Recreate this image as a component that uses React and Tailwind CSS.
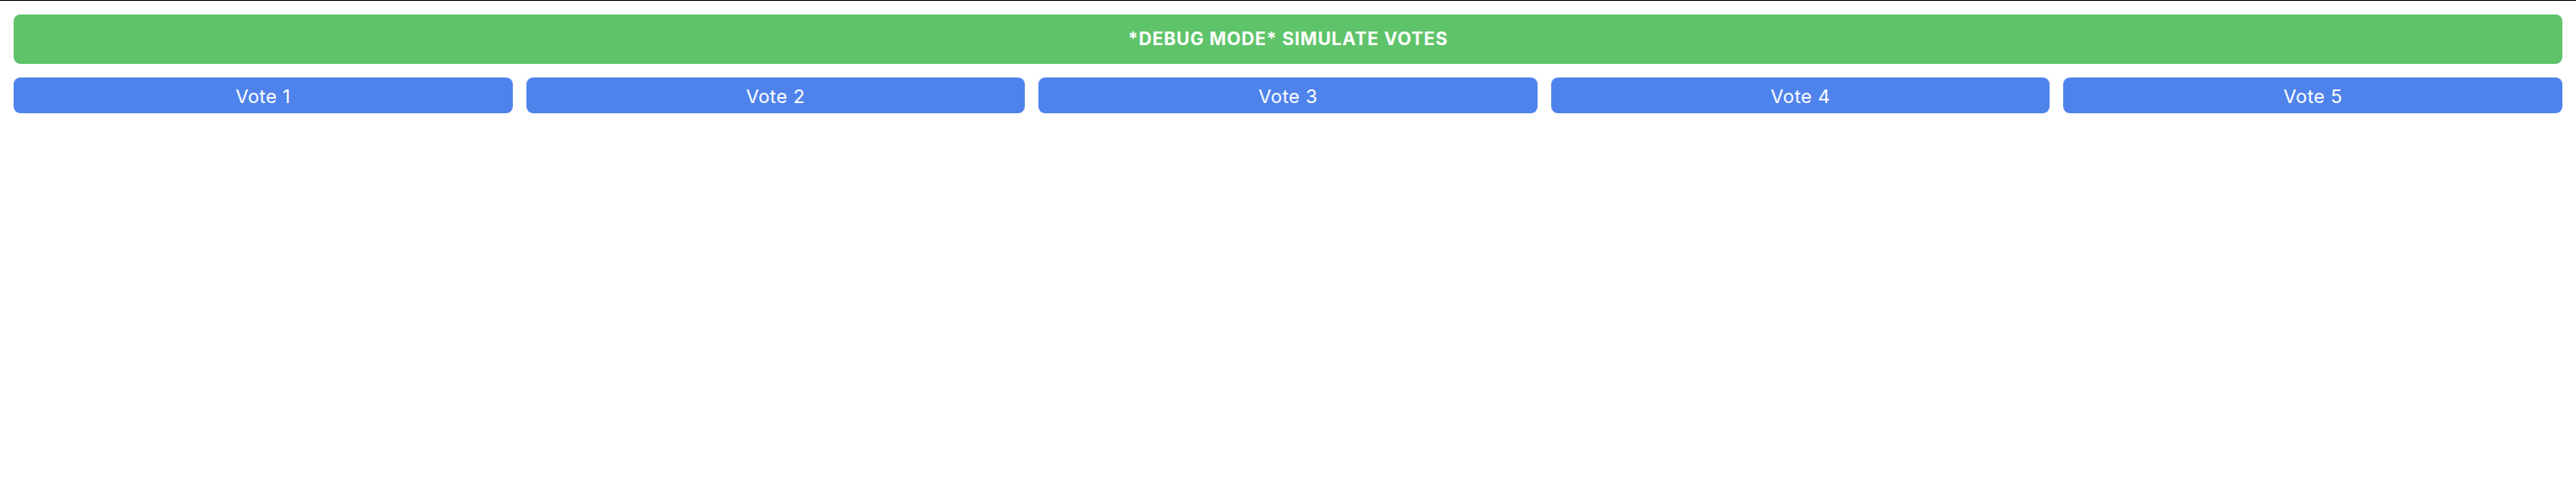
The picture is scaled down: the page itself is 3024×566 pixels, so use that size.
export default function App() {
  const votes = [1, 2, 3, 4, 5];
  return (
    <div className="min-h-[566px] w-full bg-white border-t border-black" style={{ fontFamily: "Inter, 'Noto Sans', sans-serif" }}>
      <div className="px-4 pt-4">
        <button className="w-full h-[58px] rounded-lg bg-[#5fc36a] text-white text-[21px] font-bold uppercase tracking-[0.04em]">
          *Debug Mode* Simulate Votes
        </button>
        <div className="mt-4 grid grid-cols-5 gap-4">
          {votes.map((n) => (
            <button key={n} className="h-[42px] pt-[2px] rounded-lg bg-[#4f83ec] text-white text-[22px] tracking-[0.02em]">
              Vote {n}
            </button>
          ))}
        </div>
      </div>
    </div>
  );
}
